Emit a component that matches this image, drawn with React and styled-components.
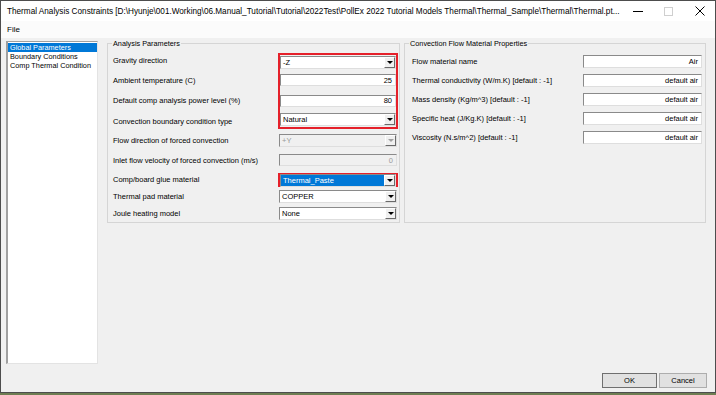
import React from 'react';
import styled, { createGlobalStyle } from 'styled-components';

const GlobalStyle = createGlobalStyle`
  html, body {
    margin: 0;
    padding: 0;
  }
  body {
    width: 716px;
    height: 395px;
    overflow: hidden;
    background: #6e7d52;
    font-family: "Liberation Sans", Arial, sans-serif;
    color: #000;
  }
`;

const Window = styled.div`
  width: 716px;
  height: 393px;
  box-sizing: border-box;
  border: 1px solid #4d4d4d;
  background: #f0f0f0;
  display: flex;
  flex-direction: column;
`;

const TitleBar = styled.div`
  height: 20px;
  flex: none;
  background: #fff;
  display: flex;
  align-items: center;
`;

const Title = styled.div`
  flex: 1;
  padding-left: 6px;
  font-size: 8.2px;
  white-space: nowrap;
  overflow: hidden;
`;

const CaptionButton = styled.div`
  width: 31px;
  height: 20px;
  display: flex;
  align-items: center;
  justify-content: center;
`;

const MenuBar = styled.div`
  height: 17px;
  flex: none;
  background: #fbfbfb;
  display: flex;
  align-items: center;
  padding-left: 6px;
  font-size: 8px;
`;

const Body = styled.div`
  flex: 1;
  display: flex;
  flex-direction: column;
  padding: 3px 8px 4px 5px;
`;

const Main = styled.div`
  height: 323px;
  display: flex;
  align-items: flex-start;
`;

/* left tree */
const TreePanel = styled.div`
  width: 92px;
  height: 323px;
  box-sizing: border-box;
  background: #fff;
  border-style: solid;
  border-width: 1px 1px 1px 2px;
  border-color: #a0a0a0 #e3e3e3 #e3e3e3 #a0a0a0;
  padding-top: 1px;
`;

const TreeItem = styled.div`
  height: 9px;
  line-height: 9px;
  font-size: 7.3px;
  padding-left: 2px;
  white-space: nowrap;
  background: ${p => (p.$selected ? '#0078d7' : 'transparent')};
  color: ${p => (p.$selected ? '#fff' : '#000')};
`;

/* group boxes */
const Groups = styled.div`
  display: flex;
  gap: 4px;
  margin-left: 9px;
  margin-top: 2px;
`;

const Group = styled.div`
  width: ${p => p.$width}px;
  box-sizing: border-box;
  border: 1px solid #d5d5d5;
  display: flex;
  flex-direction: column;
`;

const GroupCaption = styled.div`
  align-self: flex-start;
  margin: -5px 0 0 4px;
  padding: 0 1px;
  height: 9px;
  line-height: 9px;
  font-size: 7.3px;
  background: #f0f0f0;
  white-space: nowrap;
`;

const FieldList = styled.div`
  display: flex;
  flex-direction: column;
  padding: ${p => p.$top}px ${p => p.$right}px 0 ${p => p.$left}px;
`;

const Row = styled.div`
  height: ${p => p.$h}px;
  display: flex;
  align-items: center;
`;

const Label = styled.div`
  width: ${p => p.$w}px;
  flex: none;
  font-size: 7.5px;
  white-space: nowrap;
`;

const Cell = styled.div`
  width: ${p => (p.$hl ? 120 : p.$w)}px;
  box-sizing: border-box;
  align-self: stretch;
  display: flex;
  align-items: center;
  ${p =>
    p.$hl &&
    `
    margin: ${p.$first ? 3 : 0}px -1px ${p.$last ? p.$bottom : 0}px -1px;
    border-left: 2px solid #e5202a;
    border-right: 2px solid #e5202a;
    border-top: ${p.$first ? '2px solid #e5202a' : 'none'};
    border-bottom: ${p.$last ? '2px solid #e5202a' : 'none'};
  `}
`;

/* controls */
const Field = styled.div`
  flex: 1;
  height: ${p => p.$h}px;
  box-sizing: border-box;
  display: flex;
  align-items: stretch;
  border: 1px solid;
  border-color: #8a8a8a #dedede #dedede #8a8a8a;
  background: ${p => (p.$disabled ? '#f0f0f0' : '#fff')};
  font-size: 7.5px;
`;

const FieldText = styled.div`
  flex: 1;
  display: flex;
  align-items: center;
  justify-content: ${p => (p.$right ? 'flex-end' : 'flex-start')};
  padding: 0 3px 0 2px;
  white-space: nowrap;
  overflow: hidden;
  color: ${p => (p.$disabled ? '#9a9a9a' : p.$selected ? '#fff' : '#000')};
  background: ${p => (p.$selected ? '#0078d7' : 'transparent')};
`;

const DropButton = styled.div`
  width: 11px;
  flex: none;
  box-sizing: border-box;
  background: #f0f0f0;
  border: 1px solid;
  border-color: #fff #6a6a6a #6a6a6a #fff;
  display: flex;
  align-items: center;
  justify-content: center;
`;

const Arrow = styled.div`
  width: 0;
  height: 0;
  border-left: 3px solid transparent;
  border-right: 3px solid transparent;
  border-top: 3px solid ${p => (p.$disabled ? '#a0a0a0' : '#000')};
`;

const Footer = styled.div`
  margin-top: 9px;
  display: flex;
  justify-content: flex-end;
  gap: 2px;
`;

const Button = styled.button`
  width: ${p => p.$w}px;
  height: 15px;
  padding: 0;
  box-sizing: border-box;
  font-family: inherit;
  font-size: 7.5px;
  color: #000;
  background: #e1e1e1;
  border: 1px solid ${p => (p.$default ? '#6f6f6f' : '#adadad')};
`;

const Combo = ({ value, disabled, selected }) => (
  <Field $h={13} $disabled={disabled}>
    <FieldText $disabled={disabled} $selected={selected}>{value}</FieldText>
    <DropButton>
      <Arrow $disabled={disabled} />
    </DropButton>
  </Field>
);

const TextBox = ({ value, disabled, h = 12 }) => (
  <Field $h={h} $disabled={disabled}>
    <FieldText $right $disabled={disabled}>{value}</FieldText>
  </Field>
);

const analysisRows = [
  { label: 'Gravity direction', h: 20, combo: true, value: '-Z', hl: true, first: true },
  { label: 'Ambient temperature (C)', h: 20, value: '25', hl: true },
  { label: 'Default comp analysis power level (%)', h: 21, value: '80', hl: true },
  { label: 'Convection boundary condition type', h: 20, combo: true, value: 'Natural', hl: true, last: true, bottom: 2 },
  { label: 'Flow direction of forced convection', h: 19, combo: true, value: '+Y', disabled: true },
  { label: 'Inlet flow velocity of forced convection (m/s)', h: 20, value: '0', disabled: true },
  { label: 'Comp/board glue material', h: 18, combo: true, value: 'Thermal_Paste', selected: true, hl: true, first: true, last: true, bottom: 1 },
  { label: 'Thermal pad material', h: 17, combo: true, value: 'COPPER' },
  { label: 'Joule heating model', h: 17, combo: true, value: 'None' },
];

const flowRows = [
  { label: 'Flow material name', value: 'Air' },
  { label: 'Thermal conductivity (W/m.K) [default : -1]', value: 'default air' },
  { label: 'Mass density (Kg/m^3) [default : -1]', value: 'default air' },
  { label: 'Specific heat (J/Kg.K) [default : -1]', value: 'default air' },
  { label: 'Viscosity (N.s/m^2) [default : -1]', value: 'default air' },
];

const App = () => (
  <>
    <GlobalStyle />
    <Window>
      <TitleBar>
        <Title>
          Thermal Analysis Constraints [D:\Hyunje\001.Working\06.Manual_Tutorial\Tutorial\2022Test\PollEx 2022 Tutorial Models Thermal\Thermal_Sample\Thermal\Thermal.pt...
        </Title>
        <CaptionButton>
          <svg width="10" height="10" viewBox="0 0 10 10">
            <line x1="0" y1="5.5" x2="10" y2="5.5" stroke="#000" strokeWidth="1" />
          </svg>
        </CaptionButton>
        <CaptionButton>
          <svg width="9" height="9" viewBox="0 0 9 9">
            <rect x="0.5" y="0.5" width="8" height="8" fill="none" stroke="#cfcfcf" strokeWidth="1" />
          </svg>
        </CaptionButton>
        <CaptionButton>
          <svg width="10" height="10" viewBox="0 0 10 10">
            <path d="M0.5 0.5 L9.5 9.5 M9.5 0.5 L0.5 9.5" stroke="#000" strokeWidth="1" />
          </svg>
        </CaptionButton>
      </TitleBar>
      <MenuBar>File</MenuBar>
      <Body>
        <Main>
          <TreePanel>
            <TreeItem $selected>Global Parameters</TreeItem>
            <TreeItem>Boundary Conditions</TreeItem>
            <TreeItem>Comp Thermal Condition</TreeItem>
          </TreePanel>
          <Groups>
            <Group $width={293}>
              <GroupCaption>Analysis Parameters</GroupCaption>
              <FieldList $top={2} $left={5} $right={1}>
                {analysisRows.map(r => (
                  <Row key={r.label} $h={r.h}>
                    <Label $w={166}>{r.label}</Label>
                    <Cell $w={118} $hl={r.hl} $first={r.first} $last={r.last} $bottom={r.bottom}>
                      {r.combo ? (
                        <Combo value={r.value} disabled={r.disabled} selected={r.selected} />
                      ) : (
                        <TextBox value={r.value} disabled={r.disabled} />
                      )}
                    </Cell>
                  </Row>
                ))}
              </FieldList>
            </Group>
            <Group $width={302}>
              <GroupCaption>Convection Flow Material Properties</GroupCaption>
              <FieldList $top={4} $left={7} $right={3}>
                {flowRows.map(r => (
                  <Row key={r.label} $h={19}>
                    <Label $w={171}>{r.label}</Label>
                    <Cell $w={119}>
                      <TextBox value={r.value} h={13} />
                    </Cell>
                  </Row>
                ))}
              </FieldList>
            </Group>
          </Groups>
        </Main>
        <Footer>
          <Button $w={55} $default>OK</Button>
          <Button $w={48}>Cancel</Button>
        </Footer>
      </Body>
    </Window>
  </>
);

export default App;
